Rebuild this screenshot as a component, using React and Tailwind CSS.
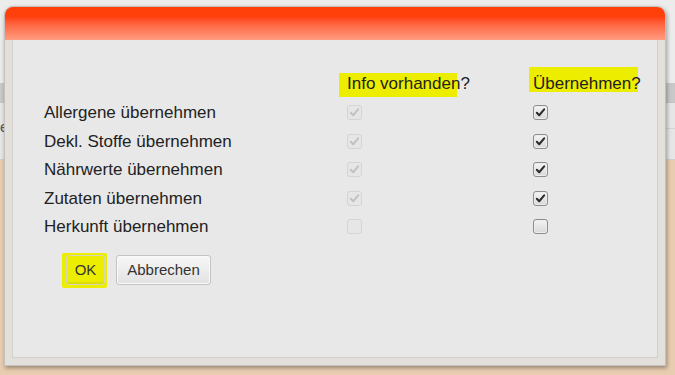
// App.jsx — "Daten übernehmen" dialog over a page

const rows = [
  { label: "Allergene übernehmen", info: true, take: true },
  { label: "Dekl. Stoffe übernehmen", info: true, take: true },
  { label: "Nährwerte übernehmen", info: true, take: true },
  { label: "Zutaten übernehmen", info: true, take: true },
  { label: "Herkunft übernehmen", info: false, take: false },
];

function Check({ checked, disabled }) {
  return (
    <span
      className={`flex h-[15px] w-[15px] items-center justify-center rounded-[3px] border ${
        disabled
          ? "border-[#d4d4d4] bg-[#e6e6e6]"
          : "border-[#8e8e8e] bg-gradient-to-b from-[#f4f4f4] to-[#d9d9d9] shadow-[inset_0_0_0_1px_#ececec]"
      }`}
    >
      {checked && (
        <svg viewBox="0 0 12 12" className="h-[11px] w-[11px]">
          <path
            d="M2 6.3 L4.6 9 L10 2.6"
            fill="none"
            stroke={disabled ? "#c2c2c2" : "#2b2b2b"}
            strokeWidth="2.2"
            strokeLinecap="round"
            strokeLinejoin="round"
          />
        </svg>
      )}
    </span>
  );
}

export default function App() {
  return (
    <div className="relative h-[375px] w-[675px] overflow-hidden font-['Liberation_Sans',Arial,sans-serif] text-[#222]">
      {/* page behind */}
      <div className="flex h-full flex-col">
        <div className="h-[83px] bg-[#ececec]" />
        <div className="h-[20px] border-b border-[#c4c4c4] bg-[#c9c9c9]" />
        <div className="flex h-[57px] flex-col bg-[#e6e6e6]">
          <div className="h-[26px] border-b border-[#d4d4d4] pt-[16px] text-[15px] leading-[15px] text-[#555]">
            er
          </div>
          <div className="flex-1 border-b border-[#cfcfcf]" />
        </div>
        <div className="flex-1 bg-[#e8cdb0]" />
      </div>

      {/* dialog */}
      <div className="absolute left-[4px] top-[6px] flex h-[360px] w-[662px] flex-col rounded-t-[9px] border border-[#c4c1bd] bg-[#e3e0dc] shadow-[1px_2px_4px_rgba(0,0,0,0.35)]">
        <div className="h-[33px] rounded-t-[8px] bg-gradient-to-b from-[#ff400a] from-30% to-[#ff9c80]" />
        <div className="flex flex-1 flex-col px-[7px] pb-[7px]">
          <div className="flex flex-1 flex-col border border-t-0 border-[#d3d0cc] bg-[#e8e8e8] pl-[31px] pt-[30px]">
            {/* header row */}
            <div className="flex h-[28.5px] text-[17px] leading-[20px]">
              <div className="w-[303px]" />
              <div className="relative w-[186px]">
                <span className="absolute left-[-8px] top-[3px] h-[24px] w-[118px] bg-[#eded00]" />
                <span className="relative top-[4px]">Info vorhanden?</span>
              </div>
              <div className="relative">
                <span className="absolute left-[-4px] top-[-3px] h-[25px] w-[109px] bg-[#eded00]" />
                <span className="relative top-[4px]">Übernehmen?</span>
              </div>
            </div>

            {rows.map((r) => (
              <div key={r.label} className="flex h-[28.5px] items-center text-[17px]">
                <div className="w-[303px]">{r.label}</div>
                <div className="w-[186px]">
                  <Check checked={r.info} disabled />
                </div>
                <div>
                  <Check checked={r.take} />
                </div>
              </div>
            ))}

            {/* buttons */}
            <div className="relative ml-[22px] mt-[14px] flex gap-[11px] text-[15px]">
              <span className="absolute left-[-4px] top-[-2px] h-[35px] w-[45px] rounded-[2px] bg-[#eded00]" />
              <button className="relative h-[30px] w-[39px] rounded-[3px] border border-[#d6d6b8] bg-[#eded00] text-[#333] shadow-[inset_0_-2px_0_#dede00]">
                OK
              </button>
              <button className="h-[30px] w-[95px] rounded-[3px] border border-[#c3c3c3] bg-gradient-to-b from-[#f7f7f7] to-[#e2e2e2] text-[#333] shadow-[inset_0_0_0_1px_#fafafa]">
                Abbrechen
              </button>
            </div>
          </div>
        </div>
      </div>
    </div>
  );
}
